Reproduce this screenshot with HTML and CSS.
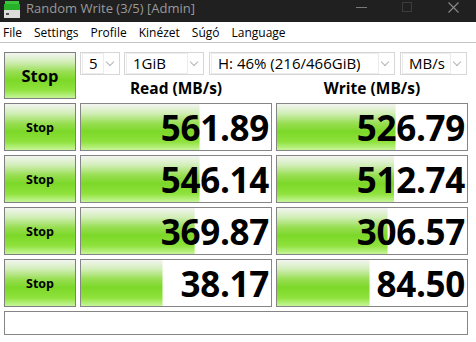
FILE: index.html
```html
<!DOCTYPE html>
<html lang="hu">
<head>
  <meta charset="UTF-8"/>
  <title>Random Write (3/5) [Admin]</title>
  <link rel="stylesheet" href="styles.css">
</head>
<body>
  <div class="titlebar">
    <svg class="appicon" width="16" height="18" viewBox="0 0 16 18">
      <rect x="1" y="0" width="14" height="3" fill="#3cc43c"/>
      <rect x="0" y="3" width="16" height="6" fill="#28b028"/>
      <rect x="0" y="9" width="16" height="8" fill="#dcdcdc"/>
      <rect x="2" y="12" width="3" height="2" fill="#505050"/>
    </svg>
    <span class="title">Random Write (3/5) [Admin]</span>
    <div class="wincontrols">
      <span class="wc min"></span>
      <span class="wc max"></span>
      <svg class="wc close" width="11" height="11" viewBox="0 0 11 11"><path d="M0.5 0.5L10.5 10.5M10.5 0.5L0.5 10.5" stroke="#8a8a8a" stroke-width="1.1"/></svg>
    </div>
  </div>

  <div class="menubar">
    <span>File</span><span>Settings</span><span>Profile</span><span>Kinézet</span><span>Súgó</span><span>Language</span>
  </div>

  <div class="main">
    <div class="stop big">Stop</div>
    <div class="controls">
      <div class="combos">
        <div class="combo c-count"><span class="val">5</span><span class="chev"></span></div>
        <div class="combo c-size"><span class="val">1GiB</span><span class="chev"></span></div>
        <div class="combo c-drive"><span class="val">H: 46% (216/466GiB)</span><span class="chev"></span></div>
        <div class="combo c-unit"><span class="val">MB/s</span><span class="chev"></span></div>
      </div>
      <div class="heads">
        <div class="head">Read (MB/s)</div>
        <div class="head">Write (MB/s)</div>
      </div>
    </div>

    <div class="stop">Stop</div>
    <div class="result" style="background-size:62.4% 100%">561.89</div>
    <div class="result" style="background-size:62.4% 100%">526.79</div>

    <div class="stop">Stop</div>
    <div class="result" style="background-size:62.4% 100%">546.14</div>
    <div class="result" style="background-size:61.6% 100%">512.74</div>

    <div class="stop">Stop</div>
    <div class="result" style="background-size:59.8% 100%">369.87</div>
    <div class="result" style="background-size:58.2% 100%">306.57</div>

    <div class="stop">Stop</div>
    <div class="result" style="background-size:42.9% 100%">38.17</div>
    <div class="result" style="background-size:48.7% 100%">84.50</div>

    <div class="comment"></div>
  </div>
</body>
</html>
```

FILE: styles.css
```css
body { margin:0; background:#fff; font-family:'Open Sans','Noto Sans',Arial,sans-serif; color:#000; width:476px; height:342px; overflow:hidden; }

.titlebar { height:22px; background:#202020; display:flex; align-items:flex-start; }
.appicon { margin:1px 0 0 4px; }
.title { color:#9a9a9a; font-size:13px; line-height:17px; margin:0 0 0 6px; }
.wincontrols { margin-left:auto; display:flex; align-items:flex-start; }
.wc { display:block; }
.min { width:11px; height:1px; background:#7a7a7a; margin:7px 35px 0 0; }
.max { width:8px; height:8px; border:1px solid #3c3c3c; margin:2px 36px 0 0; }
.close { margin:2px 17px 0 0; }

.menubar { height:20px; border-bottom:1px solid #c4c4c4; display:flex; align-items:center; font-size:12px; padding-left:3px; }
.menubar span { margin-right:12px; }

.main { display:grid; grid-template-columns:72px 192px 192px; grid-template-rows:47px 48px 48px 48px 48px 24px; column-gap:4px; row-gap:4px; padding:9px 0 0 4px; }

.stop { border:1px solid #7f7f7f; box-sizing:border-box; display:flex; align-items:center; justify-content:center; font-weight:700; font-size:12.5px;
  background:linear-gradient(to bottom,#f3f5f1 0%,#d2eeb8 20%,#98de52 42%,#7cd828 60%,#8fe23c 82%,#c6f59a 100%); }
.stop.big { font-size:16.5px; }

.controls { grid-column:2 / 4; display:flex; flex-direction:column; }
.combos { display:flex; height:23px; }
.combo { box-sizing:border-box; height:23px; border:1px solid #d6d6d6; display:flex; align-items:center; font-size:15px; padding:1px; }
.combo .val { flex:1; height:19px; line-height:19px; border:1px solid #ececec; padding-left:6px; white-space:nowrap; }
.combo .chev { width:14px; height:100%; position:relative; }
.combo .chev::after { content:''; position:absolute; left:3px; top:5px; width:5px; height:5px; border-right:1px solid #b4b4b4; border-bottom:1px solid #b4b4b4; transform:rotate(45deg); }
.c-count { width:40px; margin-right:4px; }
.c-size { width:80px; margin-right:5px; }
.c-drive { width:186px; margin-right:5px; }
.c-unit { width:67px; }

.heads { flex:1; display:grid; grid-template-columns:192px 192px; column-gap:4px; }
.head { display:flex; align-items:center; justify-content:center; font-weight:700; font-size:15.5px; padding-top:2px; }

.result { border:1px solid #858585; box-sizing:border-box; display:flex; align-items:center; justify-content:flex-end; padding-right:2px;
  font-weight:700; font-size:35px; letter-spacing:-0.3px;
  background-color:#fff; background-repeat:no-repeat;
  background-image:linear-gradient(to bottom,#f3f5f1 0%,#d2eeb8 20%,#98de52 42%,#7cd828 60%,#8fe23c 82%,#c6f59a 100%); }

.comment { grid-column:1 / 4; border:1px solid #858585; box-sizing:border-box; }
```
